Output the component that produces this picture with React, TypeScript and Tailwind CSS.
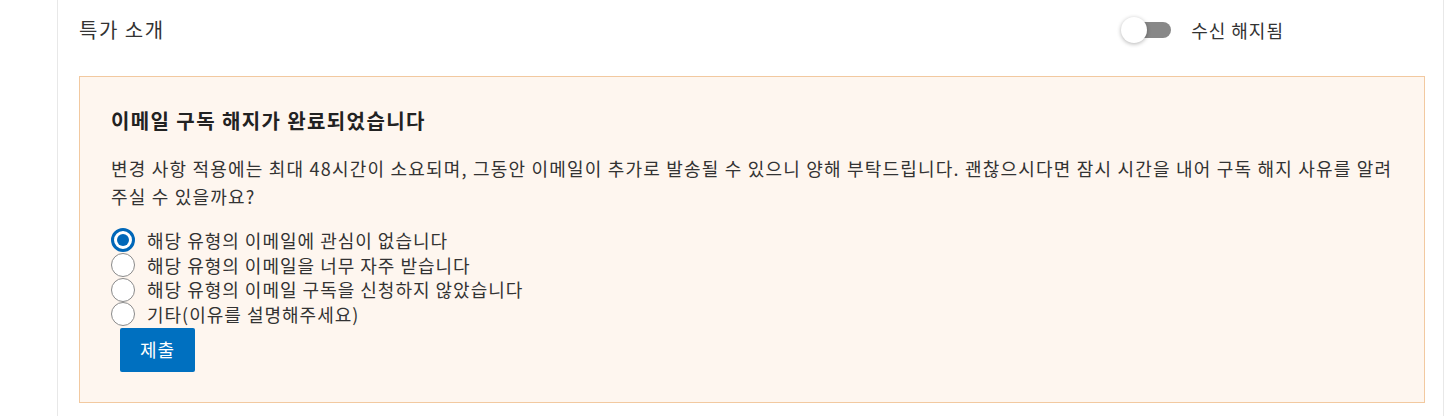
const font = { fontFamily: '"Noto Sans CJK KR", "Noto Sans", sans-serif' };

const reasons = [
  "해당 유형의 이메일에 관심이 없습니다",
  "해당 유형의 이메일을 너무 자주 받습니다",
  "해당 유형의 이메일 구독을 신청하지 않았습니다",
  "기타(이유를 설명해주세요)",
];

function Radio({ checked }: { checked: boolean }) {
  return checked ? (
    <span className="h-[24px] w-[24px] shrink-0 rounded-full border-[3px] border-[#0067b8] bg-white grid place-items-center">
      <span className="h-[12px] w-[12px] rounded-full bg-[#0067b8]" />
    </span>
  ) : (
    <span className="h-[24px] w-[24px] shrink-0 rounded-full border border-[#8a8a8a] bg-white" />
  );
}

export default function App() {
  return (
    <div className="w-[1452px] h-[416px] bg-white flex text-[#333]" style={font}>
      <div className="w-[58px] border-r border-[#e8e8e8]" />
      <div className="w-[1386px] pl-[21px] pr-[18px] border-r border-[#e8e8e8]">
        <div className="h-[60px] flex items-center">
          <div className="flex-1 text-[20px] tracking-[1.5px] leading-none">특가 소개</div>
          <div className="flex items-center mr-[141px]">
            <div className="relative w-[50px] h-[26px]">
              <span className="absolute left-[8px] top-[5px] h-[16px] w-[42px] rounded-full bg-[#888]" />
              <span className="absolute left-0 top-0 h-[26px] w-[26px] rounded-full bg-white shadow-[0_1px_4px_rgba(0,0,0,0.3)]" />
            </div>
            <span className="ml-[20px] text-[18px] tracking-[1px]">수신 해지됨</span>
          </div>
        </div>
        <div className="mt-[16px] h-[327px] border border-[#f2c9a0] bg-[#fef6ef] pl-[31px] pr-[20px] pt-[29px]">
          <h2 className="text-[20px] font-bold tracking-[1.4px] leading-[30px] text-[#222]">이메일 구독 해지가 완료되었습니다</h2>
          <p className="mt-[18px] text-[18px] tracking-[1.2px] leading-[28px]">
            <span className="block whitespace-nowrap">변경 사항 적용에는 최대 48시간이 소요되며, 그동안 이메일이 추가로 발송될 수 있으니 양해 부탁드립니다. 괜찮으시다면 잠시 시간을 내어 구독 해지 사유를 알려</span>
            <span className="block whitespace-nowrap">주실 수 있을까요?</span>
          </p>
          <div className="mt-[18px] flex flex-col">
            {reasons.map((r, i) => (
              <label key={i} className="h-[24.7px] flex items-center gap-[12px]">
                <Radio checked={i === 0} />
                <span className="text-[18px] tracking-[1px]">{r}</span>
              </label>
            ))}
          </div>
          <button className="mt-[1px] ml-[9px] h-[44px] w-[75px] rounded-[2px] bg-[#0070c0] text-white text-[18px] tracking-[1px]">제출</button>
        </div>
      </div>
    </div>
  );
}
